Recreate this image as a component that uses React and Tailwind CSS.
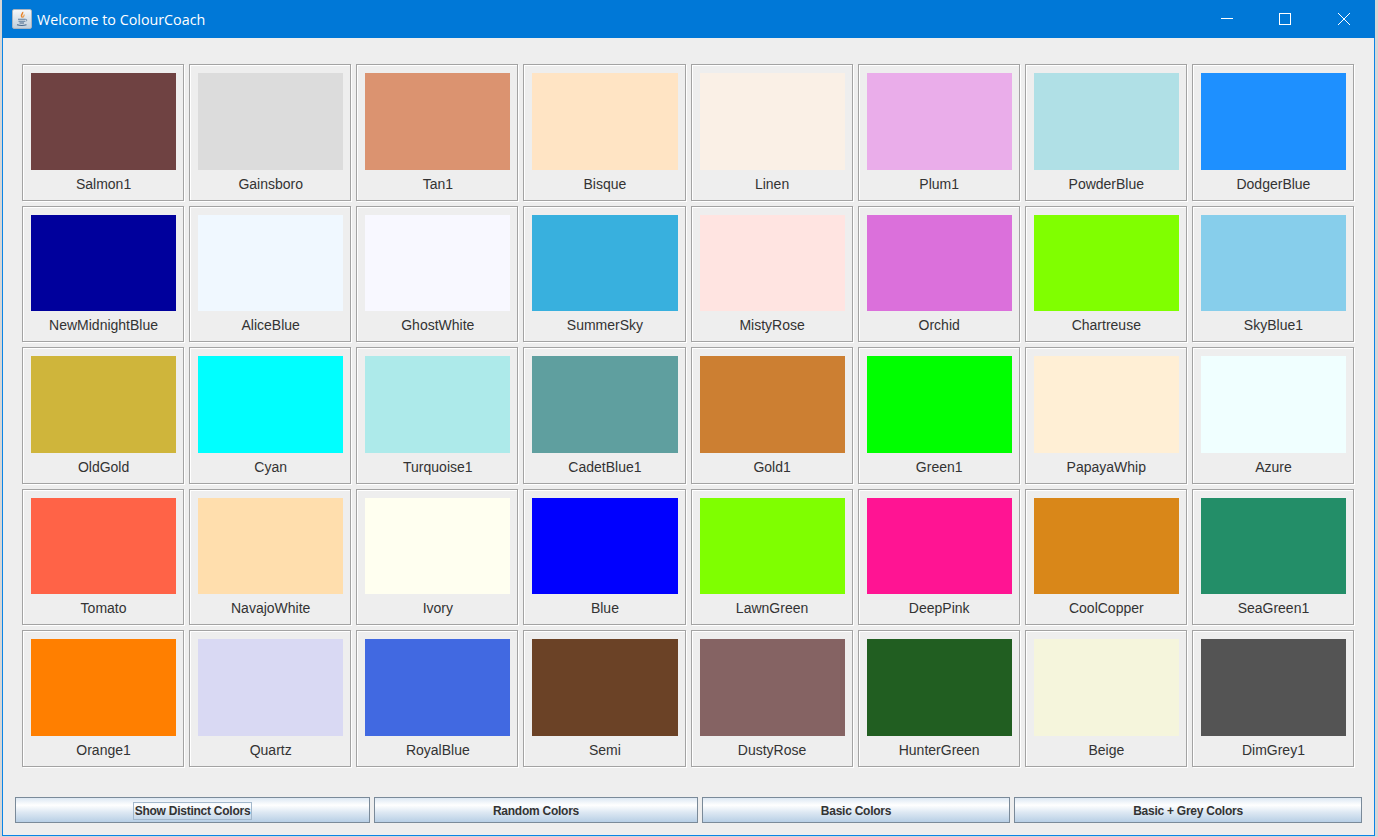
import React from 'react';

const colours = [
  ['Salmon1', 'bg-[#6f4242]'],
  ['Gainsboro', 'bg-[#dcdcdc]'],
  ['Tan1', 'bg-[#db9370]'],
  ['Bisque', 'bg-[#ffe4c4]'],
  ['Linen', 'bg-[#faf0e6]'],
  ['Plum1', 'bg-[#eaadea]'],
  ['PowderBlue', 'bg-[#b0e0e6]'],
  ['DodgerBlue', 'bg-[#1e90ff]'],
  ['NewMidnightBlue', 'bg-[#00009c]'],
  ['AliceBlue', 'bg-[#f0f8ff]'],
  ['GhostWhite', 'bg-[#f8f8ff]'],
  ['SummerSky', 'bg-[#38b0de]'],
  ['MistyRose', 'bg-[#ffe4e1]'],
  ['Orchid', 'bg-[#db70db]'],
  ['Chartreuse', 'bg-[#80ff00]'],
  ['SkyBlue1', 'bg-[#87ceeb]'],
  ['OldGold', 'bg-[#cfb53b]'],
  ['Cyan', 'bg-[#00ffff]'],
  ['Turquoise1', 'bg-[#adeaea]'],
  ['CadetBlue1', 'bg-[#5f9f9f]'],
  ['Gold1', 'bg-[#cc7f32]'],
  ['Green1', 'bg-[#00ff00]'],
  ['PapayaWhip', 'bg-[#ffefd5]'],
  ['Azure', 'bg-[#f0ffff]'],
  ['Tomato', 'bg-[#ff6347]'],
  ['NavajoWhite', 'bg-[#ffdead]'],
  ['Ivory', 'bg-[#fffff0]'],
  ['Blue', 'bg-[#0000ff]'],
  ['LawnGreen', 'bg-[#7fff00]'],
  ['DeepPink', 'bg-[#ff1493]'],
  ['CoolCopper', 'bg-[#d98719]'],
  ['SeaGreen1', 'bg-[#238e68]'],
  ['Orange1', 'bg-[#ff7f00]'],
  ['Quartz', 'bg-[#d9d9f3]'],
  ['RoyalBlue', 'bg-[#4169e1]'],
  ['Semi', 'bg-[#6b4226]'],
  ['DustyRose', 'bg-[#856363]'],
  ['HunterGreen', 'bg-[#215e21]'],
  ['Beige', 'bg-[#f5f5dc]'],
  ['DimGrey1', 'bg-[#545454]'],
];

const buttons = [
  { label: 'Show Distinct Colors', width: 'w-[355px]', focused: true },
  { label: 'Random Colors', width: 'w-[324px]' },
  { label: 'Basic Colors', width: 'w-[308px]' },
  { label: 'Basic + Grey Colors', width: 'w-[348px]' },
];

const JavaIcon = () => (
  <div className="w-[20px] h-[20px] rounded-[2px] border border-[#aab4c0] bg-gradient-to-b from-[#f4f6f8] to-[#c3cfdb] flex items-center justify-center">
    <svg width="16" height="16" viewBox="0 0 16 16" fill="none">
      <path d="M8.5 1c1 1.5-1.6 2.4-1 4 .2.6.6 1 1 1.6" stroke="#e8842c" strokeWidth="1.5" />
      <path d="M10.2 3.5c.2 1.2-1 1.6-.8 3" stroke="#e8a050" strokeWidth="1.1" />
      <path d="M4 8.3h7.5M4.5 10.2h6.5" stroke="#5d7c9c" strokeWidth="1.1" />
      <path d="M11.5 8.4c1.6-.3 1.8 1.4.1 1.9" stroke="#5d7c9c" strokeWidth="0.9" />
      <path d="M5.5 12h4.5M3 13.8c2.5.7 7 .7 9.5 0" stroke="#47678a" strokeWidth="1.1" />
    </svg>
  </div>
);

const TitleBar = () => (
  <div className="h-[38px] shrink-0 bg-[#0078d7] flex items-center text-white">
    <div className="ml-[10px] mr-[5px]">
      <JavaIcon />
    </div>
    <span className="pt-[1px] text-[14.3px] font-['Open_Sans',sans-serif]">Welcome to ColourCoach</span>
    <div className="ml-auto mr-[2px] flex h-full">
      <div className="w-[58.5px] flex items-center justify-center">
        <svg width="12" height="12" viewBox="0 0 12 12" stroke="white" strokeWidth="1">
          <path d="M0 5.5h12" />
        </svg>
      </div>
      <div className="w-[58.5px] flex items-center justify-center">
        <svg width="12" height="12" viewBox="0 0 12 12" fill="none" stroke="white" strokeWidth="1">
          <rect x="0.5" y="0.5" width="11" height="11" />
        </svg>
      </div>
      <div className="w-[58.5px] flex items-center justify-center">
        <svg width="12" height="12" viewBox="0 0 12 12" stroke="white" strokeWidth="1">
          <path d="M0 0l12 12M12 0L0 12" />
        </svg>
      </div>
    </div>
  </div>
);

const ColourCell = ({ name, swatch }) => (
  <div className="flex flex-col border border-[#a3a3a3] pt-[8px] pl-[8px] pr-[7px] shadow-[inset_1px_1px_0_#fff,1px_1px_0_#fff] min-h-0">
    <div className={`flex-1 min-h-0 ${swatch}`} />
    <div className="h-[30px] pb-[1px] shrink-0 flex items-center justify-center text-[14px] text-[#333333] font-['Liberation_Sans',sans-serif]">
      {name}
    </div>
  </div>
);

const App = () => {
  return (
    <div className="w-[1378px] h-[837px] overflow-hidden bg-[#d6d6d6] pl-[2px] pr-[3px] pb-[1px]">
      <div className="h-full flex flex-col">
        <TitleBar />
        <div className="flex-1 min-h-0 flex flex-col bg-[#eeeeee] border-x border-b border-[#0a84e6]">
          <div className="grid grid-cols-8 grid-rows-5 gap-[5px] h-[703px] mt-[26px] ml-[19px] mr-[20px]">
            {colours.map(([name, swatch]) => (
              <ColourCell key={name} name={name} swatch={swatch} />
            ))}
          </div>
          <div className="flex gap-[4px] mt-[30px] ml-[12px]">
            {buttons.map((b) => (
              <button
                key={b.label}
                type="button"
                className={`${b.width} h-[26px] pt-[1px] flex items-center justify-center border border-[#7a8a99] bg-[linear-gradient(to_bottom,#dde8f3,#ffffff_30%,#dde8f3_60%,#b8cfe5)] text-[12px] tracking-[-0.25px] font-bold text-[#333333] font-['Liberation_Sans',sans-serif]`}
              >
                <span className={b.focused ? 'border border-[#a3b8cc] px-[1px] leading-[16px]' : 'leading-[16px]'}>
                  {b.label}
                </span>
              </button>
            ))}
          </div>
        </div>
      </div>
    </div>
  );
};

export default App;
